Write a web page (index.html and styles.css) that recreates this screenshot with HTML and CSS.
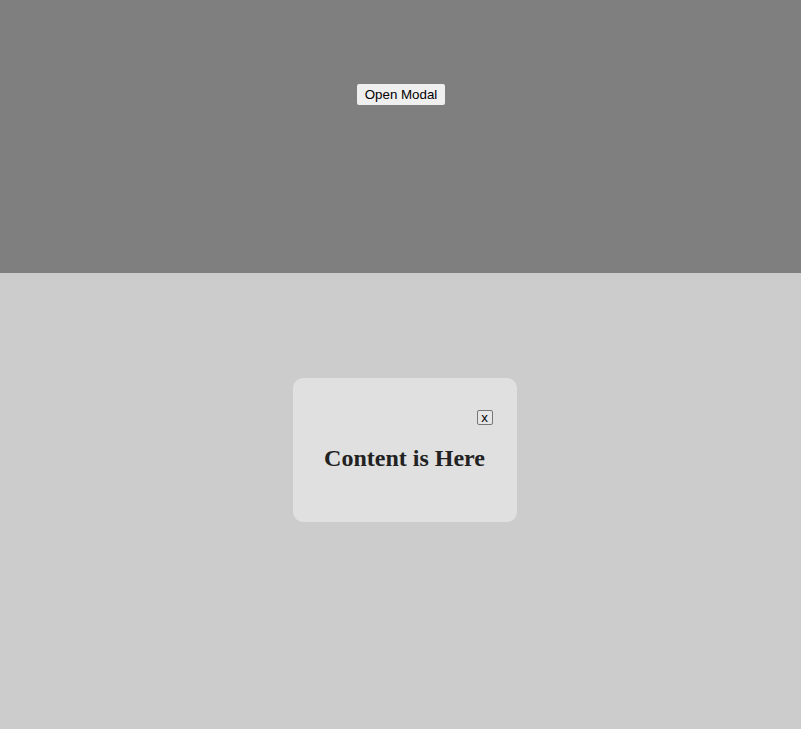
FILE: index.html
```html
<!DOCTYPE html>
<html>
<head>
<meta charset="utf-8">
<link rel="stylesheet" href="styles.css">
</head>
<body>
<div class="top">
  <button class="open-btn">Open Modal</button>
</div>
<div class="overlay">
  <div class="modal">
    <button class="close-btn">x</button>
    <h2 class="title">Content is Here</h2>
  </div>
</div>
</body>
</html>
```
FILE: styles.css
```css
html, body {
  margin: 0;
  padding: 0;
  height: 100%;
}
body {
  background: #cccccc;
  font-family: "Liberation Serif", serif;
}
.top {
  height: 273px;
  background: #7f7f7f;
  display: flex;
  justify-content: center;
  align-items: flex-start;
  padding-top: 84px;
  box-sizing: border-box;
}
.open-btn {
  font-family: "Liberation Sans", Arial, sans-serif;
  font-size: 13.333px;
  color: #000;
  background: #efefef;
  border: none;
  border-radius: 2px;
  height: 21px;
  width: 88px;
  padding: 0;
  margin-left: 1px;
}
.overlay {
  height: 456px;
  background: #cccccc;
  display: flex;
  justify-content: center;
  align-items: flex-start;
  padding-top: 105px;
  box-sizing: border-box;
}
.modal {
  width: 224px;
  height: 144px;
  box-sizing: border-box;
  background: #e0e0e0;
  border-radius: 10px;
  padding: 32px 24px 0;
  margin-left: 8px;
  display: flex;
  flex-direction: column;
}
.close-btn {
  align-self: flex-end;
  font-family: "Liberation Sans", Arial, sans-serif;
  font-size: 13.333px;
  line-height: 13px;
  color: #000;
  background: #e6e6e6;
  border: 1px solid #767676;
  border-radius: 2px;
  width: 16px;
  height: 15px;
  padding: 0;
}
.title {
  margin: 19px 0 0;
  font-size: 24px;
  font-weight: bold;
  text-align: center;
  color: #222;
  line-height: 28px;
}
```
